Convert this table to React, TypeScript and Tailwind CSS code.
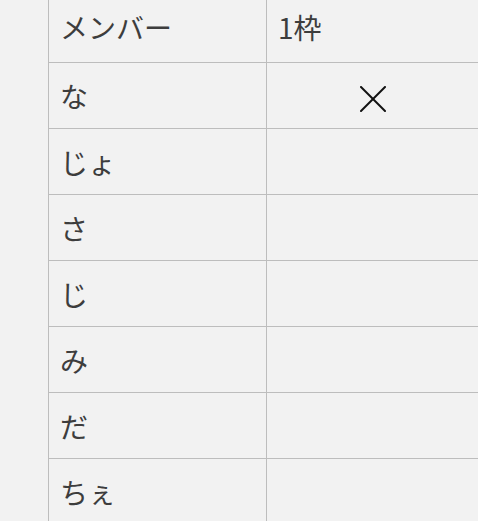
import { Fragment } from 'react';

const members = ['な', 'じょ', 'さ', 'じ', 'み', 'だ', 'ちぇ'];

function Cross() {
  return (
    <svg width="26" height="26" viewBox="0 0 26 26" className="block">
      <line x1="1" y1="1" x2="25" y2="25" stroke="#111" strokeWidth="2" strokeLinecap="round" />
      <line x1="25" y1="1" x2="1" y2="25" stroke="#111" strokeWidth="2" strokeLinecap="round" />
    </svg>
  );
}

export default function App() {
  return (
    <div
      className="h-[521px] w-[478px] overflow-hidden bg-[#f2f2f2] pl-[48px] text-[28px] text-[#3d3d3d]"
      style={{ fontFamily: '"Noto Sans CJK JP", "Noto Sans", sans-serif' }}
    >
      <div className="-mt-[3px] border-l border-[#bdbdbd]">
        {/* header */}
        <div className="flex h-[66px] border-b border-[#bdbdbd]">
          <div className="flex w-[218px] items-center border-r border-[#bdbdbd] pb-[6px] pl-[11px]">メンバー</div>
          <div className="flex flex-1 items-center pb-[6px] pl-[11px]">1枠</div>
        </div>

        {members.map((name, i) => (
          <Fragment key={name}>
            <div className="flex h-[66px] border-b border-[#bdbdbd]">
              <div className="flex w-[218px] items-center border-r border-[#bdbdbd] pl-[11px]">{name}</div>
              <div className="flex flex-1 items-center justify-center pt-[6px]">
                {i === 0 && <Cross />}
              </div>
            </div>
          </Fragment>
        ))}
      </div>
    </div>
  );
}
